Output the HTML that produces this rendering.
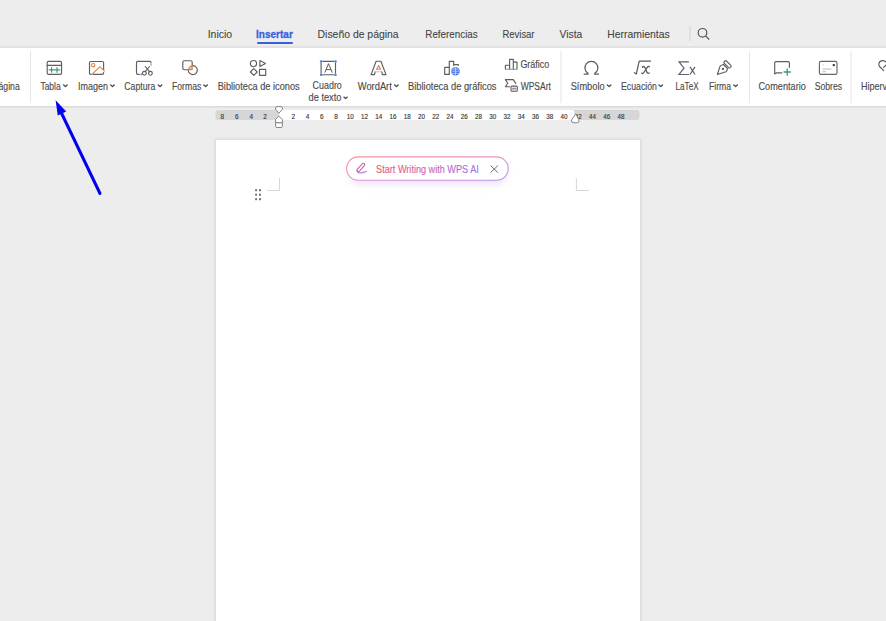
<!DOCTYPE html>
<html><head><meta charset="utf-8">
<style>
html,body{margin:0;padding:0;width:886px;height:621px;overflow:hidden;background:#ededed;}
svg{position:absolute;left:0;top:0;}
text{font-family:"Liberation Sans",sans-serif;}
</style></head>
<body>
<svg width="886" height="621" viewBox="0 0 886 621">
<defs>
  <linearGradient id="pillB" x1="0" y1="0" x2="1" y2="1">
    <stop offset="0" stop-color="#f7909c"/>
    <stop offset="0.5" stop-color="#e494c8"/>
    <stop offset="1" stop-color="#b690f0"/>
  </linearGradient>
  <linearGradient id="pillT" x1="0" y1="0" x2="1" y2="0">
    <stop offset="0" stop-color="#e9566e"/>
    <stop offset="0.45" stop-color="#cf62a8"/>
    <stop offset="0.75" stop-color="#b06ad0"/>
    <stop offset="1" stop-color="#9b72e0"/>
  </linearGradient>
  <linearGradient id="penG" gradientUnits="userSpaceOnUse" x1="357" y1="172" x2="365" y2="163">
    <stop offset="0" stop-color="#cc4f96"/>
    <stop offset="1" stop-color="#c27ee0"/>
  </linearGradient>
  <linearGradient id="tbShadow" x1="0" y1="0" x2="0" y2="1">
    <stop offset="0" stop-color="#d8d8d8"/>
    <stop offset="1" stop-color="#ededed"/>
  </linearGradient>
  <filter id="pillShadow" x="-20%" y="-60%" width="140%" height="260%"><feGaussianBlur stdDeviation="4"/></filter>
  <filter id="pgShadow" x="-5%" y="-5%" width="110%" height="110%"><feGaussianBlur stdDeviation="0.8"/></filter>
</defs>

<!-- tab bar -->
<g font-size="11.6" fill="#444444" stroke="#444444" stroke-width="0.1">
  <text x="207.7" y="37.8" textLength="24.5" lengthAdjust="spacingAndGlyphs">Inicio</text>
  <text x="256.1" y="37.8" textLength="36.7" lengthAdjust="spacingAndGlyphs" font-weight="bold" fill="#3a5fdc" stroke="#3a5fdc" stroke-width="0.3">Insertar</text>
  <text x="317.6" y="37.8" textLength="81" lengthAdjust="spacingAndGlyphs">Diseño de página</text>
  <text x="425.3" y="37.8" textLength="52.4" lengthAdjust="spacingAndGlyphs">Referencias</text>
  <text x="502.5" y="37.8" textLength="32" lengthAdjust="spacingAndGlyphs">Revisar</text>
  <text x="559.6" y="37.8" textLength="22.6" lengthAdjust="spacingAndGlyphs">Vista</text>
  <text x="607.3" y="37.8" textLength="62.3" lengthAdjust="spacingAndGlyphs">Herramientas</text>
</g>
<rect x="257" y="42" width="36" height="2" rx="1" fill="#3a5fdc"/>
<rect x="689.5" y="26" width="1" height="15" fill="#d4d4d4"/>
<g fill="none" stroke="#555" stroke-width="1.2">
  <circle cx="702.5" cy="32.8" r="4.3"/>
  <line x1="705.6" y1="35.9" x2="709.2" y2="39.5"/>
</g>

<!-- toolbar -->
<rect x="0" y="46" width="886" height="2" fill="#e2e2e2"/>
<rect x="0" y="48" width="886" height="58" fill="#ffffff"/>
<rect x="0" y="106" width="886" height="2.8" fill="url(#tbShadow)"/>
<g fill="#e6e6e6">
  <rect x="30" y="51" width="1" height="52"/>
  <rect x="560.5" y="51" width="1" height="52"/>
  <rect x="749" y="51" width="1" height="52"/>
  <rect x="850.5" y="51" width="1" height="52"/>
</g>

<g font-size="10.6" fill="#4a4a4a" stroke="#4a4a4a" stroke-width="0.14">
  <text x="-1.5" y="89.8" textLength="21.2" lengthAdjust="spacingAndGlyphs">ágina</text>
  <text x="40.4" y="89.8" textLength="20.3" lengthAdjust="spacingAndGlyphs">Tabla</text>
  <text x="78" y="89.8" textLength="30" lengthAdjust="spacingAndGlyphs">Imagen</text>
  <text x="124.3" y="89.8" textLength="31" lengthAdjust="spacingAndGlyphs">Captura</text>
  <text x="172" y="89.8" textLength="29.3" lengthAdjust="spacingAndGlyphs">Formas</text>
  <text x="217.7" y="89.8" textLength="82" lengthAdjust="spacingAndGlyphs">Biblioteca de iconos</text>
  <text x="312.6" y="89.2" textLength="29.2" lengthAdjust="spacingAndGlyphs">Cuadro</text>
  <text x="308.5" y="101.2" textLength="33" lengthAdjust="spacingAndGlyphs">de texto</text>
  <text x="357.8" y="89.8" textLength="34" lengthAdjust="spacingAndGlyphs">WordArt</text>
  <text x="408.1" y="89.8" textLength="88.4" lengthAdjust="spacingAndGlyphs">Biblioteca de gráficos</text>
  <text x="520.4" y="68" textLength="28.8" lengthAdjust="spacingAndGlyphs">Gráfico</text>
  <text x="520.7" y="89.8" textLength="30.2" lengthAdjust="spacingAndGlyphs">WPSArt</text>
  <text x="570.7" y="89.8" textLength="33.9" lengthAdjust="spacingAndGlyphs">Símbolo</text>
  <text x="621" y="89.8" textLength="35.9" lengthAdjust="spacingAndGlyphs">Ecuación</text>
  <text x="675.5" y="89.8" textLength="23.2" lengthAdjust="spacingAndGlyphs">LaTeX</text>
  <text x="709" y="89.8" textLength="22.1" lengthAdjust="spacingAndGlyphs">Firma</text>
  <text x="758.5" y="89.8" textLength="47.3" lengthAdjust="spacingAndGlyphs">Comentario</text>
  <text x="814.7" y="89.8" textLength="27.4" lengthAdjust="spacingAndGlyphs">Sobres</text>
  <text x="860.9" y="89.8" textLength="50" lengthAdjust="spacingAndGlyphs">Hipervínculo</text>
</g>
<!-- chevrons -->
<g fill="none" stroke="#4a4a4a" stroke-width="1.3" stroke-linecap="round" stroke-linejoin="round">
  <polyline points="63.6,85 65.4,86.6 67.2,85"/>
  <polyline points="110.7,85 112.5,86.6 114.3,85"/>
  <polyline points="158.2,85 160,86.6 161.8,85"/>
  <polyline points="203.8,85 205.6,86.6 207.4,85"/>
  <polyline points="343.9,97.1 345.6,98.6 347.3,97.1"/>
  <polyline points="394.6,85 396.4,86.6 398.2,85"/>
  <polyline points="607.3,85 609.1,86.6 610.9,85"/>
  <polyline points="659,85 660.8,86.6 662.6,85"/>
  <polyline points="733.8,85 735.6,86.6 737.4,85"/>
</g>

<!-- icons -->
<g fill="none" stroke="#5e5e5e" stroke-width="1.15" stroke-linejoin="round" stroke-linecap="round">
  <!-- Tabla -->
  <rect x="47.2" y="61.4" width="14.35" height="13" rx="1.3"/>
  <line x1="47.2" y1="65.3" x2="61.55" y2="65.3"/>
  <!-- Imagen -->
  <path d="M91.3,74.3 H90.8 Q89.5,74.3 89.5,73 V62.8 Q89.5,61.5 90.8,61.5 H102.3 Q103.6,61.5 103.6,62.8 V69.6 M103.6,72.4 V73 Q103.6,74.3 102.3,74.3 H93.2"/>
  <!-- Captura -->
  <path d="M151,63 V62.7 Q151,61.4 149.7,61.4 H137.8 Q136.5,61.4 136.5,62.7 V73 Q136.5,74.3 137.8,74.3 H139.4"/>
  <circle cx="144.4" cy="73.3" r="1.9"/>
  <circle cx="150.4" cy="73.3" r="1.9"/>
  <line x1="145.3" y1="66.5" x2="149.6" y2="71.7"/>
  <line x1="149.5" y1="66.5" x2="145.2" y2="71.7"/>
  <!-- Formas -->
  <path d="M188.5,69.7 H184.3 Q182.8,69.7 182.8,68.2 V62.2 Q182.8,60.7 184.3,60.7 H190.7 Q192.2,60.7 192.2,62.2 V65.7"/>
  <path d="M192.2,65.7 A4.5,4.5 0 1 1 188.3,70.2"/>
  <!-- Biblioteca de iconos -->
  <circle cx="253.5" cy="63.6" r="3.1"/>
  <path d="M259.9,60.6 L265.5,63.6 L259.9,66.6 Z"/>
  <path d="M253.8,68.6 L257.2,72 L253.8,75.4 L250.4,72 Z"/>
  <rect x="259.5" y="69.3" width="6.2" height="6"/>
  <!-- Cuadro de texto -->
  <path d="M321.1,63 V73.1 M335.5,63 V73.1 M322.7,61.4 H333.9 M322.7,74.7 H333.9"/>
  <!-- WordArt A -->
  <path d="M381.7,71.7 L382.4,74.6 H386 L380.9,61.2 H376.1 L371.1,74.6 H374.5 L375.2,71.7"/>
  <path d="M375.6,71.7 H381.4" stroke="#c4c4c4"/>
  <!-- Biblioteca de graficos -->
  <path d="M449.3,74.4 H444.7 V67.3 H449.3 Z M449.3,67.3 V61.3 H453.7 V65.5 M453.7,64.6 H457.9 Q458.5,64.6 458.5,65.5"/>
  <!-- Grafico -->
  <path d="M505.4,69.1 V65.2 H509.6 V69.1 M509.6,65.2 V59.4 H513.3 V69.1 M513.3,62.1 H517 V69.1"/>
  <!-- WPSArt -->
  <path d="M513.2,79.6 H505.4 L507.7,83.2 L505.4,86.7 H509.6 M513.2,79.6 L515.8,83.3"/>
  <rect x="511" y="86.1" width="6.3" height="5.2" rx="1" stroke-width="1.1"/>
  <path d="M512.3,88.7 H516" stroke="#777" stroke-width="1.1"/>
  <path d="M513.2,87 V90.4 M515.1,87 V90.4" stroke="#999" stroke-width="0.6"/>
  <!-- Comentario -->
  <path d="M781.8,72.8 H776.5 L774.7,74 V62.9 Q774.7,61.6 776,61.6 H788.1 Q789.4,61.6 789.4,62.9 V67.3"/>
  <!-- Sobres -->
  <rect x="819.4" y="61.3" width="17.6" height="13.1" rx="1.6" stroke="#666"/>
  <!-- pen Firma -->
  <path d="M717.4,74.5 L719.9,66.6 Q720.6,65.1 723.3,64.5 L727.5,68.6 Q727,71 726,71.8 Z"/>
  <g transform="translate(727.5,64.3) rotate(45)"><rect x="-4.2" y="-1.6" width="8.4" height="3.2" rx="1.1"/></g>
  <!-- Hipervinculo -->
  <path d="M886,62 Q884.3,60.4 882.2,60.6 Q879,61.1 878.8,64 Q878.7,65.6 880,67 L883.8,70.6"/>
  <path d="M883.7,67.4 L886,65.2"/>
  <!-- search done above -->
  <!-- ruler markers -->
</g>
<!-- colored icon parts -->
<g fill="none" stroke-linecap="round" stroke-linejoin="round">
  <path d="M49.2,69.8 H59.8 M51.6,67.5 V72.2 M57,67.5 V72.2" stroke="#3c9b78" stroke-width="1.2"/>
  <circle cx="93.2" cy="65.2" r="1.7" stroke="#e0804f" stroke-width="1.1"/>
  <path d="M91.8,74.4 L99.8,66.9 L104.4,70.9" stroke="#e0804f" stroke-width="1.2"/>
  <path d="M188.6,69.6 A4.3,4.3 0 0 1 192.1,65.9 V69.6 Z" fill="#f6d2bd" stroke="#e0804f" stroke-width="1.3"/>
  <path d="M378.6,65.6 L380.6,69.3 H376.6 Z" stroke="#e0804f" stroke-width="1.1"/>
  <path d="M784,72 H790.4 M787.2,68.8 V75.2" stroke="#3c9b78" stroke-width="1.3"/>
  <path d="M505.9,69.2 H516.5" stroke="#4fb08f" stroke-width="1.1"/>
</g>
<g fill="#4a7be6">
  <circle cx="321.1" cy="61.4" r="1.25"/>
  <circle cx="335.5" cy="61.4" r="1.25"/>
  <circle cx="321.1" cy="74.7" r="1.25"/>
  <circle cx="335.5" cy="74.7" r="1.25"/>
  <circle cx="151" cy="64.8" r="0.9" fill="#8fa6f2"/>
  <circle cx="141.4" cy="74.4" r="0.9"/>
  <circle cx="455.5" cy="71.2" r="4.3"/>
</g>
<g stroke="#ffffff" stroke-width="0.6" fill="none" opacity="0.85">
  <path d="M451.4,71.2 H459.6 M455.5,67.1 V75.3 M452.3,69 H458.7 M452.3,73.4 H458.7"/>
</g>
<path d="M324.8,72.6 L328.5,63.7 L332.3,72.6 M326.1,69.6 H330.9" fill="none" stroke="#5a5a5a" stroke-width="1"/>
<path d="M583.7,74.2 H588 V73.3 A6.5,6.5 0 1 1 594.8,73.3 V74.2 H599" fill="none" stroke="#5c5c5c" stroke-width="1.25" stroke-linejoin="round"/>
<path d="M634,72.4 L636.3,74 L639.2,61.2 H650.9" fill="none" stroke="#5a5a5a" stroke-width="1.2" stroke-linejoin="round"/>
<path d="M642.4,67.3 Q643.6,65.4 644.9,67.6 L647.1,72.4 Q648,74.1 649.3,72.9 M649.4,66.9 Q648.5,65.8 647.2,67.4 L643.9,72.5 Q642.9,74 641.7,73.2" fill="none" stroke="#555" stroke-width="1.25" stroke-linecap="round"/>
<path d="M688.9,61.9 H679 L684,68.2 L679,74.5 H688.9" fill="none" stroke="#5b6170" stroke-width="1.2" stroke-linejoin="miter"/>
<path d="M690,66.8 L695,74.5 M695,66.8 L690,74.5" fill="none" stroke="#5b6170" stroke-width="1.2"/>
<circle cx="722.9" cy="68.9" r="1.1" fill="#555"/>
<circle cx="833.8" cy="65.1" r="1.2" fill="#333"/>
<path d="M822.5,69.2 H831.5 M822.5,71.7 H826" stroke="#c8c8c8" stroke-width="1.2"/>
<path d="M822.5,64.8 H823.5" stroke="#aaa" stroke-width="0.8"/>

<!-- ruler -->
<rect x="215.5" y="110.1" width="424" height="9.9" rx="3" fill="#d6d6d6"/>
<path d="M279,110.1 H572.3 Q574.3,110.1 574.3,112.1 V120 H279 Z" fill="#ffffff"/>
<g font-size="7" fill="#3a3a3a" stroke="#3a3a3a" stroke-width="0.15" text-anchor="middle">
  <text x="222.2" y="118.6" textLength="3.6" lengthAdjust="spacingAndGlyphs">8</text>
  <text x="236.9" y="118.6" textLength="3.6" lengthAdjust="spacingAndGlyphs">6</text>
  <text x="251.2" y="118.6" textLength="3.6" lengthAdjust="spacingAndGlyphs">4</text>
  <text x="265.1" y="118.6" textLength="3.6" lengthAdjust="spacingAndGlyphs">2</text>
  <text x="293.2" y="118.6" textLength="3.6" lengthAdjust="spacingAndGlyphs">2</text>
  <text x="307.5" y="118.6" textLength="3.6" lengthAdjust="spacingAndGlyphs">4</text>
  <text x="321.8" y="118.6" textLength="3.6" lengthAdjust="spacingAndGlyphs">6</text>
  <text x="336.0" y="118.6" textLength="3.6" lengthAdjust="spacingAndGlyphs">8</text>
  <text x="350.2" y="118.6" textLength="7.0" lengthAdjust="spacingAndGlyphs">10</text>
  <text x="364.5" y="118.6" textLength="7.0" lengthAdjust="spacingAndGlyphs">12</text>
  <text x="378.8" y="118.6" textLength="7.0" lengthAdjust="spacingAndGlyphs">14</text>
  <text x="393.0" y="118.6" textLength="7.0" lengthAdjust="spacingAndGlyphs">16</text>
  <text x="407.2" y="118.6" textLength="7.0" lengthAdjust="spacingAndGlyphs">18</text>
  <text x="421.5" y="118.6" textLength="7.0" lengthAdjust="spacingAndGlyphs">20</text>
  <text x="435.8" y="118.6" textLength="7.0" lengthAdjust="spacingAndGlyphs">22</text>
  <text x="450.0" y="118.6" textLength="7.0" lengthAdjust="spacingAndGlyphs">24</text>
  <text x="464.2" y="118.6" textLength="7.0" lengthAdjust="spacingAndGlyphs">26</text>
  <text x="478.5" y="118.6" textLength="7.0" lengthAdjust="spacingAndGlyphs">28</text>
  <text x="492.8" y="118.6" textLength="7.0" lengthAdjust="spacingAndGlyphs">30</text>
  <text x="507.0" y="118.6" textLength="7.0" lengthAdjust="spacingAndGlyphs">32</text>
  <text x="521.2" y="118.6" textLength="7.0" lengthAdjust="spacingAndGlyphs">34</text>
  <text x="535.5" y="118.6" textLength="7.0" lengthAdjust="spacingAndGlyphs">36</text>
  <text x="549.8" y="118.6" textLength="7.0" lengthAdjust="spacingAndGlyphs">38</text>
  <text x="564.0" y="118.6" textLength="7.0" lengthAdjust="spacingAndGlyphs">40</text>
  <text x="578.2" y="118.6" textLength="7.0" lengthAdjust="spacingAndGlyphs">42</text>
  <text x="592.5" y="118.6" textLength="7.0" lengthAdjust="spacingAndGlyphs">44</text>
  <text x="606.8" y="118.6" textLength="7.0" lengthAdjust="spacingAndGlyphs">46</text>
  <text x="621.0" y="118.6" textLength="7.0" lengthAdjust="spacingAndGlyphs">48</text>
</g>
<g fill="#ffffff" stroke="#7a7a7a" stroke-width="0.9" stroke-linejoin="round">
  <path d="M275.6,108 Q275.6,106.6 277,106.6 H281 Q282.4,106.6 282.4,108 V109.3 L278.9,113.2 L275.6,109.3 Z"/>
  <path d="M278.9,116.2 L282.4,119.4 V122.8 H275.6 V119.4 Z"/>
  <path d="M275.6,122.8 H282.4 V126.3 Q282.4,127.5 281.2,127.5 H276.8 Q275.6,127.5 275.6,126.3 Z"/>
  <path d="M575.8,113.9 L578.9,119.8 Q579.5,122.8 576.8,122.8 H574 Q571,122.8 571.5,120 Z"/>
</g>

<!-- page -->
<rect x="214.6" y="138.6" width="426.8" height="490" fill="#d9d9d9" filter="url(#pgShadow)"/>
<rect x="216" y="140" width="424" height="490" fill="#ffffff"/>
<!-- crop marks -->
<path d="M279.5,178 V190.5 H267.3 M576.4,178.2 V190.5 H588.7" fill="none" stroke="#d6d6d6" stroke-width="1"/>
<g fill="#727272">
  <rect x="255.1" y="189.2" width="2" height="2"/>
  <rect x="259" y="189.2" width="2" height="2"/>
  <rect x="255.1" y="193.7" width="2" height="2"/>
  <rect x="259" y="193.7" width="2" height="2"/>
  <rect x="255.1" y="198.2" width="2" height="2"/>
  <rect x="259" y="198.2" width="2" height="2"/>
</g>

<!-- WPS AI pill -->
<rect x="350" y="162" width="156" height="22" rx="11" fill="#d9c6f5" opacity="0.55" filter="url(#pillShadow)"/>
<rect x="346.6" y="156.9" width="161.6" height="23.4" rx="11.7" fill="#ffffff" stroke="url(#pillB)" stroke-width="1.1"/>
<g transform="translate(360.8,167.5) rotate(-48.5)"><rect x="-5.2" y="-1.4" width="10.4" height="2.8" rx="1.4" fill="none" stroke="url(#penG)" stroke-width="1"/></g>
<circle cx="357.6" cy="171.4" r="0.9" fill="#d0569a"/>
<path d="M357.9,172.4 Q361,173.8 366.3,171.4" fill="none" stroke="#b88cf2" stroke-width="1.2" stroke-linecap="round"/>
<text x="376.1" y="172.7" font-size="10.1" fill="url(#pillT)" stroke="url(#pillT)" stroke-width="0.1" textLength="102.7" lengthAdjust="spacingAndGlyphs">Start Writing with WPS AI</text>
<path d="M490.8,165.8 L497.6,172.4 M497.6,165.8 L490.8,172.4" stroke="#6e6e6e" stroke-width="1" stroke-linecap="round"/>

<!-- blue arrow -->
<line x1="100" y1="193.5" x2="60" y2="110" stroke="#0000ee" stroke-width="3" stroke-linecap="round"/>
<polygon points="55.6,100.3 57.8,115.6 66.2,111.5" fill="#0000ee"/>
</svg>
</body></html>
